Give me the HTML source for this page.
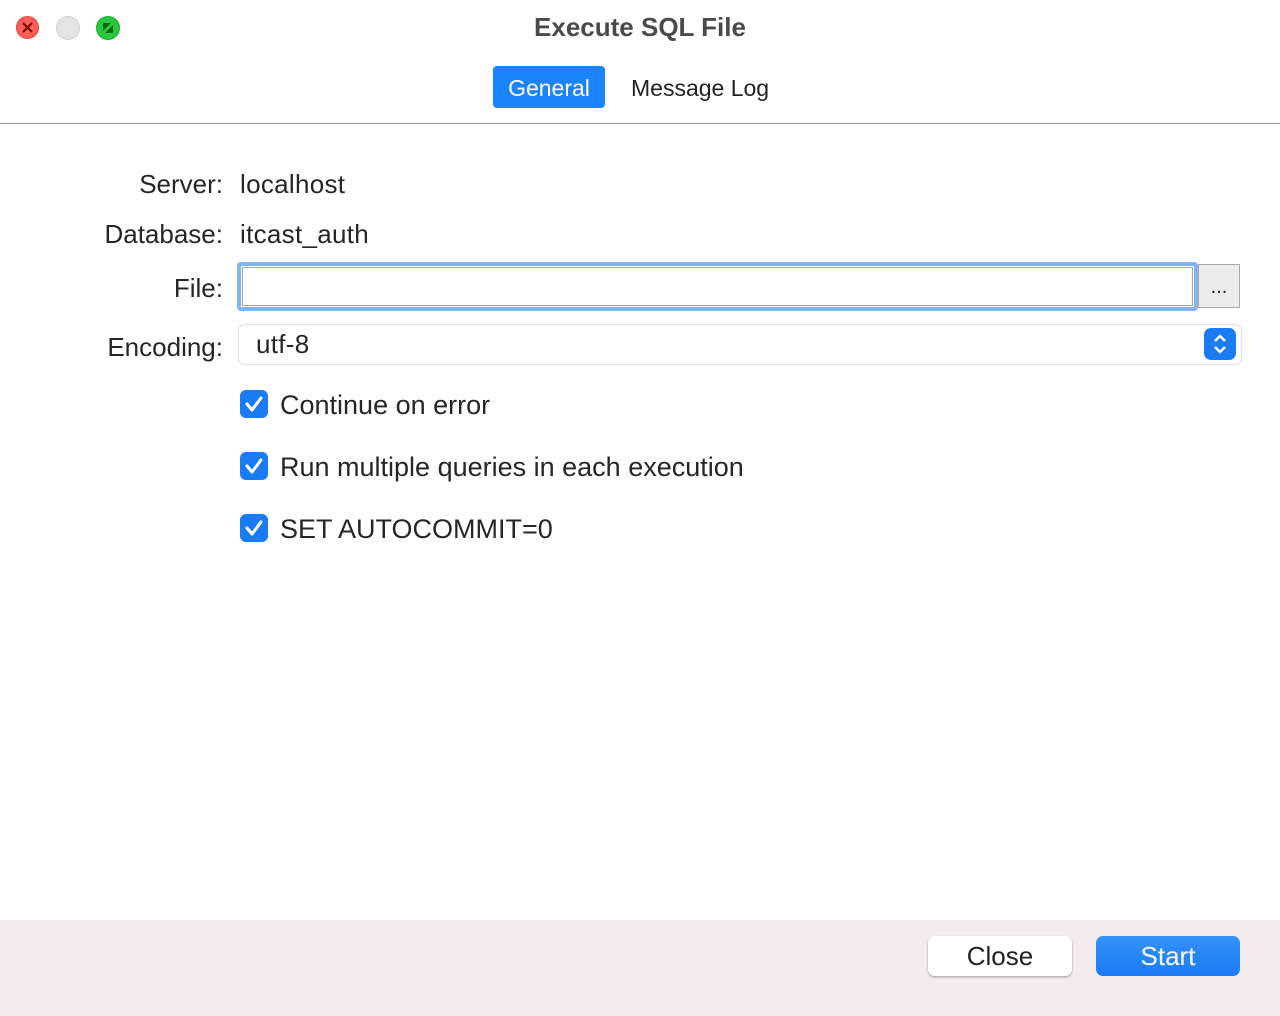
<!DOCTYPE html>
<html><head><style>
body{margin:0;width:1280px;height:1016px;background:#fff;font-family:"Liberation Sans",sans-serif;color:#222;position:relative;overflow:hidden}
.a{position:absolute}
.lbl{position:absolute;right:1057px;font-size:26px;color:#262626;white-space:nowrap}
.val{position:absolute;left:240px;font-size:26px;color:#262626;letter-spacing:0.3px}
.cb{position:absolute;left:240px;width:28px;height:28px;border-radius:6px;background:#1a7cf5}
.ct{position:absolute;left:280px;font-size:27px;color:#262626}
</style></head><body>
<div class="a" style="left:16px;top:16px;width:23px;height:23px;border-radius:50%;background:#fe5f57;border:1px solid #e0443e;box-sizing:border-box"></div>
<svg class="a" style="left:16px;top:16px" width="23" height="23"><path d="M7 7L16 16M16 7L7 16" stroke="#7a0a06" stroke-width="2.2"/></svg>
<div class="a" style="left:56px;top:16px;width:24px;height:24px;border-radius:50%;background:#e4e4e4;border:1px solid #cfcfcf;box-sizing:border-box"></div>
<div class="a" style="left:96px;top:16px;width:24px;height:24px;border-radius:50%;background:#28c840;border:1px solid #1aab29;box-sizing:border-box"></div>
<svg class="a" style="left:96px;top:16px" width="24" height="24"><path d="M7 7H15L7 15Z M17 9V17H9Z" fill="#0b650d"/></svg>
<div class="a" style="left:0;top:12px;width:1280px;text-align:center;font-size:26px;font-weight:bold;color:#4a4a4a">Execute SQL File</div>
<div class="a" style="left:493px;top:66px;width:112px;height:42px;background:#1a84f8;border-radius:4px;color:#fff;font-size:23px;line-height:44px;text-align:center">General</div>
<div class="a" style="left:631px;top:66px;font-size:23px;line-height:44px;color:#222">Message Log</div>
<div class="a" style="left:0;top:123px;width:1280px;height:1px;background:#9a9a9a"></div>

<div class="lbl" style="top:169px">Server:</div><div class="val" style="top:169px">localhost</div>
<div class="lbl" style="top:219px">Database:</div><div class="val" style="top:219px">itcast_auth</div>
<div class="lbl" style="top:273px">File:</div>
<div class="a" style="left:237px;top:262px;width:961px;height:49px;border:4px solid #83b3f2;border-radius:4px;box-sizing:border-box"></div>
<div class="a" style="left:242px;top:267px;width:951px;height:39px;border:1px solid #9ab;box-sizing:border-box"></div>
<div class="a" style="left:1198px;top:264px;width:42px;height:44px;background:#ececec;border:1px solid #aaa;box-sizing:border-box;text-align:center;font-size:20px;line-height:44px">...</div>
<div class="lbl" style="top:332px">Encoding:</div>
<div class="a" style="left:239px;top:325px;width:1002px;height:39px;border-radius:6px;box-shadow:0 0 1px 1px #ddd;background:#fff"></div>
<div class="val" style="left:256px;top:329px">utf-8</div>
<div class="a" style="left:1204px;top:328px;width:32px;height:32px;background:#1a7cf5;border-radius:7px"></div>
<svg class="a" style="left:1204px;top:328px" width="32" height="32"><path d="M11 13L16 8L21 13M11 19L16 24L21 19" stroke="#fff" stroke-width="2.4" fill="none"/></svg>

<div class="cb" style="top:390px"></div><svg class="a" style="left:240px;top:390px" width="28" height="28"><path d="M7 14L12 20L21 8" stroke="#fff" stroke-width="3" fill="none" stroke-linecap="round" stroke-linejoin="round"/></svg>
<div class="ct" style="top:390px">Continue on error</div>
<div class="cb" style="top:452px"></div><svg class="a" style="left:240px;top:452px" width="28" height="28"><path d="M7 14L12 20L21 8" stroke="#fff" stroke-width="3" fill="none" stroke-linecap="round" stroke-linejoin="round"/></svg>
<div class="ct" style="top:452px">Run multiple queries in each execution</div>
<div class="cb" style="top:514px"></div><svg class="a" style="left:240px;top:514px" width="28" height="28"><path d="M7 14L12 20L21 8" stroke="#fff" stroke-width="3" fill="none" stroke-linecap="round" stroke-linejoin="round"/></svg>
<div class="ct" style="top:514px">SET AUTOCOMMIT=0</div>

<div class="a" style="left:0;top:920px;width:1280px;height:96px;background:#f4ecec"></div>
<div class="a" style="left:928px;top:936px;width:144px;height:40px;background:#fff;border-radius:7px;box-shadow:0 1px 2px rgba(0,0,0,.35);text-align:center;line-height:40px;font-size:26px;color:#222">Close</div>
<div class="a" style="left:1096px;top:936px;width:144px;height:40px;background:linear-gradient(#3592f8,#1a7cf5);border-radius:7px;text-align:center;line-height:40px;font-size:26px;color:#fff">Start</div>
</body></html>
